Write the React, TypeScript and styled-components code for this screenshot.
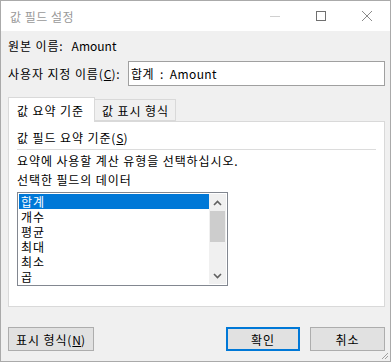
import React from 'react';
import styled, { createGlobalStyle } from 'styled-components';

const FONT = `'Noto Sans CJK KR', 'Liberation Sans', sans-serif`;

const GlobalStyle = createGlobalStyle`
	html, body {
		margin: 0;
		padding: 0;
		background: #ffffff;
	}
	body {
		font-family: ${FONT};
		font-size: 12px;
		letter-spacing: 0.9px;
		color: #000000;
	}
`;

const Window = styled.div`
	width: 391px;
	height: 362px;
	box-sizing: border-box;
	border: 1px solid #aaaaaa;
	display: flex;
	flex-direction: column;
	background: #f0f0f0;
	overflow: hidden;
	position: relative;
`;

const TitleBar = styled.div`
	height: 30px;
	background: #ffffff;
	display: flex;
	align-items: center;
	padding-left: 9px;
	flex-shrink: 0;
`;

const Title = styled.div`
	flex: 1;
	font-size: 12px;
	color: #999999;
	letter-spacing: 0.5px;
`;

const Controls = styled.div`
	display: flex;
	align-items: center;
	height: 100%;
`;

const ControlButton = styled.div`
	width: 46px;
	height: 100%;
	display: flex;
	align-items: center;
	justify-content: center;
`;

const Body = styled.div`
	flex: 1;
	display: flex;
	flex-direction: column;
	padding: 7px 5px 0 7px;
`;

const Row = styled.div<{ gap?: number }>`
	display: flex;
	align-items: center;
	gap: ${({ gap }) => gap ?? 0}px;
	line-height: 16px;
`;

const Label = styled.span`
	white-space: nowrap;
`;

const Latin = styled.span`
	letter-spacing: 0;
`;

const Mnemonic = styled.span`
	text-decoration: underline;
	text-underline-offset: 1px;
	letter-spacing: 0;
`;

const NameRow = styled(Row)`
	margin-top: 7px;
`;

const TextInput = styled.div`
	width: 257px;
	margin-left: auto;
	height: 25px;
	box-sizing: border-box;
	border: 1px solid #a0a0a0;
	background: #ffffff;
	display: flex;
	align-items: center;
	padding-left: 2px;
	white-space: pre;
	letter-spacing: 0.4px;
	word-spacing: 3px;
`;

const TabStrip = styled.div`
	display: flex;
	align-items: flex-end;
	margin-top: 10px;
	height: 25px;
	position: relative;
	z-index: 1;
`;

const Tab = styled.div<{ active?: boolean }>`
	box-sizing: border-box;
	width: ${({ active }) => (active ? 87 : 81)}px;
	height: ${({ active }) => (active ? 25 : 22)}px;
	margin-bottom: ${({ active }) => (active ? -1 : 0)}px;
	padding-left: ${({ active }) => (active ? 8 : 7)}px;
	display: flex;
	align-items: center;
	background: ${({ active }) => (active ? '#ffffff' : '#f0f0f0')};
	border: 1px solid #d9d9d9;
	border-bottom: ${({ active }) => (active ? 'none' : '1px solid #d9d9d9')};
	border-left: ${({ active }) => (active ? '1px solid #d9d9d9' : 'none')};
	white-space: nowrap;
`;

const Panel = styled.div`
	height: 186px;
	box-sizing: border-box;
	background: #ffffff;
	border: 1px solid #d9d9d9;
	padding: 8px 8px 0 8px;
	display: flex;
	flex-direction: column;
`;

const GroupTitle = styled.div`
	line-height: 16px;
	padding-bottom: 3px;
	border-bottom: 1px solid #dcdcdc;
`;

const Paragraph = styled.div<{ top: number }>`
	margin-top: ${({ top }) => top}px;
	line-height: 16px;
`;

const ListBox = styled.div`
	margin-top: 4px;
	width: 211px;
	height: 94px;
	box-sizing: border-box;
	border: 1px solid #828790;
	padding: 1px;
	display: flex;
	background: #ffffff;
`;

const Items = styled.div`
	flex: 1;
	display: flex;
	flex-direction: column;
	overflow: hidden;
`;

const Item = styled.div<{ selected?: boolean }>`
	height: 15px;
	line-height: 15px;
	padding-left: 2px;
	flex-shrink: 0;
	overflow: hidden;
	background: ${({ selected }) => (selected ? '#0078d7' : 'transparent')};
	color: ${({ selected }) => (selected ? '#ffffff' : '#000000')};
`;

const ScrollBar = styled.div`
	width: 17px;
	background: #f0f0f0;
	display: flex;
	flex-direction: column;
`;

const ScrollArrow = styled.div`
	height: 17px;
	display: flex;
	align-items: center;
	justify-content: center;
`;

const ScrollTrack = styled.div`
	flex: 1;
	display: flex;
	flex-direction: column;
`;

const Thumb = styled.div`
	height: 31px;
	margin: 0 1px;
	background: #cdcdcd;
`;

const ButtonRow = styled.div`
	display: flex;
	margin-top: 20px;
	gap: 10px;
`;

const Button = styled.div<{ primary?: boolean }>`
	width: ${({ primary }) => (primary ? 74 : 75)}px;
	height: 24px;
	box-sizing: border-box;
	background: #e1e1e1;
	border: ${({ primary }) => (primary ? '2px solid #0078d7' : '1px solid #adadad')};
	display: flex;
	align-items: center;
	justify-content: center;
	white-space: nowrap;
`;

const WideButton = styled(Button)`
	width: 86px;
	margin-right: auto;
`;

const Grip = styled.svg`
	position: absolute;
	right: 1px;
	bottom: 1px;
`;

const Chevron: React.FC<{ up?: boolean }> = ({ up }) => (
	<svg width="9" height="6" viewBox="0 0 9 6">
		<path
			d={up ? 'M1 5 L4.5 1.5 L8 5' : 'M1 1 L4.5 4.5 L8 1'}
			fill="none"
			stroke="#606060"
			strokeWidth="1.6"
		/>
	</svg>
);

const items = ['합계', '개수', '평균', '최대', '최소', '곱'];

export default function App() {
	return (
		<>
			<GlobalStyle />
			<Window>
				<TitleBar>
					<Title>값 필드 설정</Title>
					<Controls>
						<ControlButton>
							<svg width="10" height="10" viewBox="0 0 10 10">
								<line x1="0" y1="5.5" x2="10" y2="5.5" stroke="#d0d0d0" strokeWidth="1" />
							</svg>
						</ControlButton>
						<ControlButton>
							<svg width="10" height="10" viewBox="0 0 10 10">
								<rect x="0.5" y="0.5" width="9" height="9" fill="none" stroke="#707070" strokeWidth="1" />
							</svg>
						</ControlButton>
						<ControlButton>
							<svg width="10" height="10" viewBox="0 0 10 10">
								<path d="M0 0 L10 10 M10 0 L0 10" stroke="#8a8a8a" strokeWidth="1" />
							</svg>
						</ControlButton>
					</Controls>
				</TitleBar>
				<Body>
					<Row gap={8}>
						<Label>원본 이름:</Label>
						<Latin>Amount</Latin>
					</Row>
					<NameRow>
						<Label>
							사용자 지정 이름(<Mnemonic>C</Mnemonic>):
						</Label>
						<TextInput>{'합계 : Amount'}</TextInput>
					</NameRow>
					<TabStrip>
						<Tab active>값 요약 기준</Tab>
						<Tab>값 표시 형식</Tab>
					</TabStrip>
					<Panel>
						<GroupTitle>
							값 필드 요약 기준(<Mnemonic>S</Mnemonic>)
						</GroupTitle>
						<Paragraph top={3}>요약에 사용할 계산 유형을 선택하십시오.</Paragraph>
						<Paragraph top={3}>선택한 필드의 데이터</Paragraph>
						<ListBox>
							<Items>
								{items.map((it, i) => (
									<Item key={it} selected={i === 0}>
										{it}
									</Item>
								))}
							</Items>
							<ScrollBar>
								<ScrollArrow>
									<Chevron up />
								</ScrollArrow>
								<ScrollTrack>
									<Thumb />
								</ScrollTrack>
								<ScrollArrow>
									<Chevron />
								</ScrollArrow>
							</ScrollBar>
						</ListBox>
					</Panel>
					<ButtonRow>
						<WideButton>
							표시 형식(<Mnemonic>N</Mnemonic>)
						</WideButton>
						<Button primary>확인</Button>
						<Button>취소</Button>
					</ButtonRow>
				</Body>
				<Grip width="10" height="10" viewBox="0 0 10 10">
					<path d="M9 3 L3 9 M9 6 L6 9" stroke="#a0a0a0" strokeWidth="1" />
				</Grip>
			</Window>
		</>
	);
}
